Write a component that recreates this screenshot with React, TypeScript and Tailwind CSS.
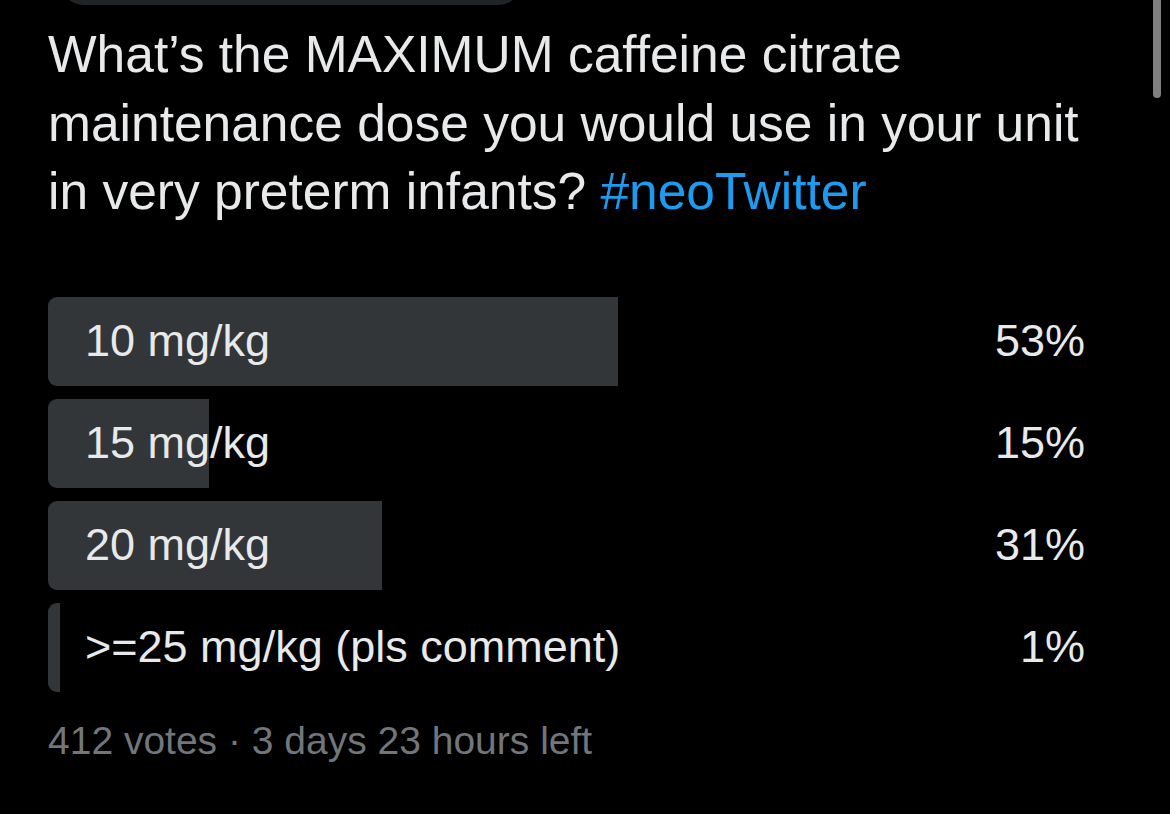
import React from "react";

interface Option {
  label: string;
  pct: string;
  fill: number; // share of the row the bar covers
}

const options: Option[] = [
  { label: "10 mg/kg", pct: "53%", fill: 53 },
  { label: "15 mg/kg", pct: "15%", fill: 15 },
  { label: "20 mg/kg", pct: "31%", fill: 31 },
  { label: ">=25 mg/kg (pls comment)", pct: "1%", fill: 1.1 },
];

function PollRow({ option }: { option: Option }) {
  return (
    <div className="grid h-[89px] w-[1076px]">
      {/* bar and text share the same grid cell */}
      <div
        className="col-start-1 row-start-1 h-full rounded-l-[9px] bg-[#333639]"
        style={{ width: `${option.fill}%` }}
      />
      <div className="col-start-1 row-start-1 flex items-center justify-between pl-[37px] pr-[39px] text-[45px] text-[#e7e9ea]">
        <span>{option.label}</span>
        <span>{option.pct}</span>
      </div>
    </div>
  );
}

export default function App() {
  return (
    <div
      className="relative h-[814px] w-[1170px] overflow-hidden bg-black"
      style={{ fontFamily: '"Liberation Sans", Arial, sans-serif' }}
    >
      {/* bottom edge of the card above */}
      <div className="ml-[60px] h-[5px] w-[462px] overflow-hidden">
        <div className="-mt-[43px] h-[48px] rounded-full bg-[#202327]" />
      </div>

      <div className="px-[48px]">
        <p className="mt-[15px] text-[51.5px] leading-[68.5px] text-[#e7e9ea]">
          What’s the MAXIMUM caffeine citrate maintenance dose you would use in
          your unit in very preterm infants?{" "}
          <span className="text-[#1d9bf0]">#neoTwitter</span>
        </p>

        <div className="mt-[71px] flex flex-col gap-[13px]">
          {options.map((o) => (
            <PollRow key={o.label} option={o} />
          ))}
        </div>

        <div className="mt-[23px] text-[39px] leading-[52px] text-[#71767b]">
          412 votes · 3 days 23 hours left
        </div>
      </div>

      {/* scroll indicator */}
      <div className="absolute right-[9px] top-0 h-[98px] w-[8px] rounded-b-full bg-[#7f7f7f]" />
    </div>
  );
}
